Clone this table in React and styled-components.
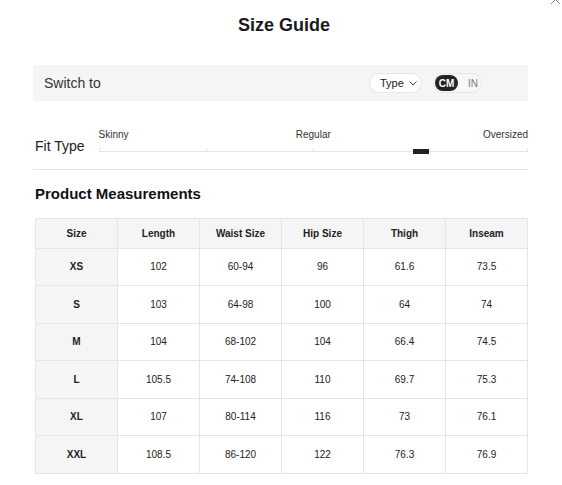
import styled, { createGlobalStyle } from "styled-components";

const GlobalStyle = createGlobalStyle`
  body {
    margin: 0;
    background: #fff;
    font-family: "Liberation Sans", Arial, sans-serif;
    color: #222;
  }
`;

const Modal = styled.div`
  position: relative;
  width: 562px;
  box-sizing: border-box;
  padding: 0 34px 12px 34px;
`;

const Close = styled.svg`
  position: absolute;
  top: -6px;
  right: 1px;
  width: 11px;
  height: 11px;
`;

const Title = styled.h1`
  margin: 0;
  padding: 14px 0 0 6px;
  height: 65px;
  box-sizing: border-box;
  text-align: center;
  font-size: 18px;
  line-height: 22px;
  font-weight: 700;
  color: #1a1a1a;
`;

const SwitchBar = styled.div`
  height: 36px;
  background: #f5f5f5;
  display: flex;
  align-items: center;
  padding: 0 46px 0 11px;
  margin-left: -1px;
`;

const SwitchLabel = styled.span`
  flex: 1;
  font-size: 14px;
  color: #333;
`;

const Pill = styled.div`
  height: 20px;
  box-sizing: border-box;
  border: 1px solid #e6e6e6;
  border-radius: 10px;
  background: #fff;
  display: flex;
  align-items: center;
`;

const TypePill = styled(Pill)`
  width: 53px;
  padding-left: 10px;
  gap: 5px;
  font-size: 11px;
  color: #222;
  margin-right: 11px;
`;

const UnitPill = styled(Pill)`
  width: 49px;
  padding: 1px;
  background: #f7f7f7;
`;

const Unit = styled.span`
  height: 16px;
  border-radius: 8px;
  padding: 0 4px;
  display: flex;
  align-items: center;
  justify-content: center;
  font-size: 10px;
  font-weight: ${(p) => (p.$active ? 700 : 400)};
  background: ${(p) => (p.$active ? "#222" : "transparent")};
  color: ${(p) => (p.$active ? "#fff" : "#777")};
  min-width: ${(p) => (p.$active ? "15px" : "auto")};
  margin-left: ${(p) => (p.$active ? "0" : "6px")};
`;

const FitRow = styled.div`
  display: flex;
  align-items: flex-end;
  gap: 14px;
  padding: 28px 0 17px 1px;
  border-bottom: 1px solid #e5e5e5;
`;

const FitLabel = styled.span`
  font-size: 14px;
  color: #222;
  line-height: 16px;
  margin-bottom: -2px;
`;

const Slider = styled.div`
  flex: 1;
`;

const SliderLabels = styled.div`
  display: grid;
  grid-template-columns: 1fr auto 1fr;
  font-size: 10px;
  color: #333;
  line-height: 12px;

  & > span:last-child {
    justify-self: end;
  }
`;

const Track = styled.div`
  position: relative;
  margin-top: 6px;
  height: 4px;
  border-bottom: 1px solid #e5e5e5;
`;

const Tick = styled.span`
  position: absolute;
  bottom: -1px;
  width: 1px;
  height: 4px;
  background: #e5e5e5;
`;

const Marker = styled.span`
  position: absolute;
  bottom: -3px;
  width: 16px;
  height: 5px;
  background: #222;
  transform: translateX(-50%);
`;

const SectionTitle = styled.h2`
  margin: 0;
  padding: 15px 0 0 1px;
  height: 48px;
  box-sizing: border-box;
  font-size: 15px;
  line-height: 18px;
  font-weight: 700;
  color: #111;
`;

const Table = styled.table`
  width: 493px;
  margin-left: 1px;
  border-collapse: collapse;
  table-layout: fixed;
  font-size: 10px;
  color: #222;
`;

const Th = styled.th`
  height: 28.5px;
  border: 1px solid #e5e5e5;
  background: #f5f5f5;
  font-weight: 700;
  padding: 0;
`;

const Td = styled.td`
  height: 36.5px;
  border: 1px solid #e5e5e5;
  text-align: center;
  padding: 0;
  background: ${(p) => (p.$head ? "#f5f5f5" : "#fff")};
  font-weight: ${(p) => (p.$head ? 700 : 400)};
`;

const columns = ["Size", "Length", "Waist Size", "Hip Size", "Thigh", "Inseam"];

const rows = [
  ["XS", "102", "60-94", "96", "61.6", "73.5"],
  ["S", "103", "64-98", "100", "64", "74"],
  ["M", "104", "68-102", "104", "66.4", "74.5"],
  ["L", "105.5", "74-108", "110", "69.7", "75.3"],
  ["XL", "107", "80-114", "116", "73", "76.1"],
  ["XXL", "108.5", "86-120", "122", "76.3", "76.9"],
];

const ticks = [0, 25, 50, 75, 100];

function App() {
  return (
    <Modal>
      <GlobalStyle />
      <Close viewBox="0 0 11 11">
        <path d="M1 1L10 10M10 1L1 10" stroke="#888" strokeWidth="1" fill="none" />
      </Close>
      <Title>Size Guide</Title>
      <SwitchBar>
        <SwitchLabel>Switch to</SwitchLabel>
        <TypePill>
          Type
          <svg width="8" height="5" viewBox="0 0 8 5">
            <path d="M0.5 0.5L4 4L7.5 0.5" stroke="#444" strokeWidth="1" fill="none" />
          </svg>
        </TypePill>
        <UnitPill>
          <Unit $active>CM</Unit>
          <Unit>IN</Unit>
        </UnitPill>
      </SwitchBar>
      <FitRow>
        <FitLabel>Fit Type</FitLabel>
        <Slider>
          <SliderLabels>
            <span>Skinny</span>
            <span>Regular</span>
            <span>Oversized</span>
          </SliderLabels>
          <Track>
            {ticks.map((t) => (
              <Tick key={t} style={{ left: `calc(${t}% - ${t === 100 ? 1 : 0}px)` }} />
            ))}
            <Marker style={{ left: "75%" }} />
          </Track>
        </Slider>
      </FitRow>
      <SectionTitle>Product Measurements</SectionTitle>
      <Table>
        <thead>
          <tr>
            {columns.map((c) => (
              <Th key={c}>{c}</Th>
            ))}
          </tr>
        </thead>
        <tbody>
          {rows.map((r) => (
            <tr key={r[0]}>
              {r.map((v, i) => (
                <Td key={i} $head={i === 0}>
                  {v}
                </Td>
              ))}
            </tr>
          ))}
        </tbody>
      </Table>
    </Modal>
  );
}

export default App;
